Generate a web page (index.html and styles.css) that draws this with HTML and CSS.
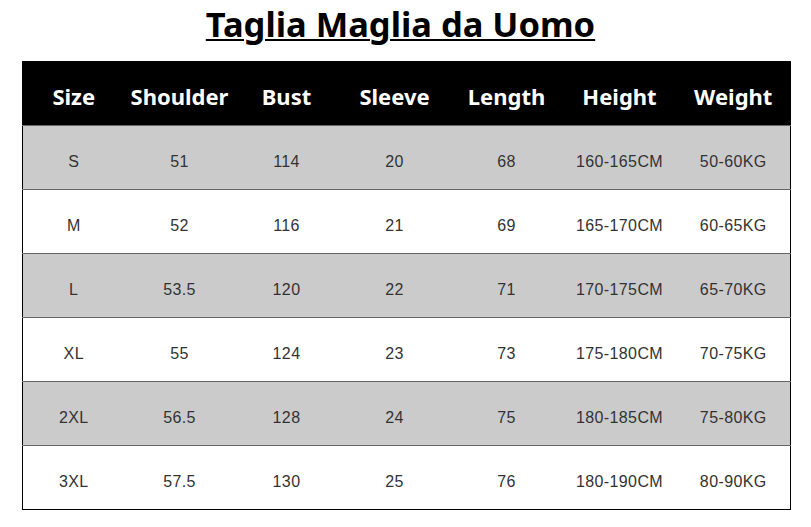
FILE: index.html
```html
<!DOCTYPE html>
<html>
<head>
<meta charset="utf-8">
<link rel="stylesheet" href="styles.css">
</head>
<body>
<h1 class="title">Taglia Maglia da Uomo</h1>
<table class="chart">
<colgroup>
<col class="c1"><col class="c2"><col class="c3"><col class="c4"><col class="c5"><col class="c6"><col class="c7">
</colgroup>
<thead>
<tr><th>Size</th><th>Shoulder</th><th>Bust</th><th>Sleeve</th><th>Length</th><th>Height</th><th>Weight</th></tr>
</thead>
<tbody>
<tr class="gray"><td>S</td><td>51</td><td>114</td><td>20</td><td>68</td><td>160-165CM</td><td>50-60KG</td></tr>
<tr><td>M</td><td>52</td><td>116</td><td>21</td><td>69</td><td>165-170CM</td><td>60-65KG</td></tr>
<tr class="gray"><td>L</td><td>53.5</td><td>120</td><td>22</td><td>71</td><td>170-175CM</td><td>65-70KG</td></tr>
<tr><td>XL</td><td>55</td><td>124</td><td>23</td><td>73</td><td>175-180CM</td><td>70-75KG</td></tr>
<tr class="gray"><td>2XL</td><td>56.5</td><td>128</td><td>24</td><td>75</td><td>180-185CM</td><td>75-80KG</td></tr>
<tr><td>3XL</td><td>57.5</td><td>130</td><td>25</td><td>76</td><td>180-190CM</td><td>80-90KG</td></tr>
</tbody>
</table>
</body>
</html>
```
FILE: styles.css
```css
html, body {
  margin: 0;
  padding: 0;
  background: #fff;
}
body {
  width: 811px;
  height: 527px;
  overflow: hidden;
}
.title {
  margin: 0;
  padding: 0 10px 0 0;
  height: 61px;
  box-sizing: border-box;
  text-align: center;
  font-family: "Noto Sans", sans-serif;
  font-weight: bold;
  font-size: 34.5px;
  line-height: 47px;
  color: #000;
  text-decoration: underline;
  text-decoration-thickness: 2px;
  text-underline-offset: 2px;
}
.chart {
  margin-left: 22px;
  border-collapse: collapse;
  table-layout: fixed;
  width: 768px;
  border: 1.5px solid #000;
  font-family: "Noto Sans", sans-serif;
}
.c1 { width: 102px; }
.c2 { width: 110px; }
.c3 { width: 104px; }
.c4 { width: 112px; }
.c5 { width: 112px; }
.c6 { width: 114px; }
.c7 { width: 114px; }
.chart th {
  background: #000;
  color: #fff;
  font-weight: bold;
  font-size: 22px;
  height: 64px;
  padding: 4px 0 0;
  box-sizing: border-box;
  text-align: center;
}
.chart td {
  height: 64px;
  padding: 8px 0 0;
  box-sizing: border-box;
  text-align: center;
  font-family: "Liberation Sans", Arial, sans-serif;
  font-size: 16px;
  letter-spacing: 0.4px;
  color: #333;
  border-top: 1px solid #666;
}
.chart tr.gray td {
  background: #cbcbcb;
}
```
